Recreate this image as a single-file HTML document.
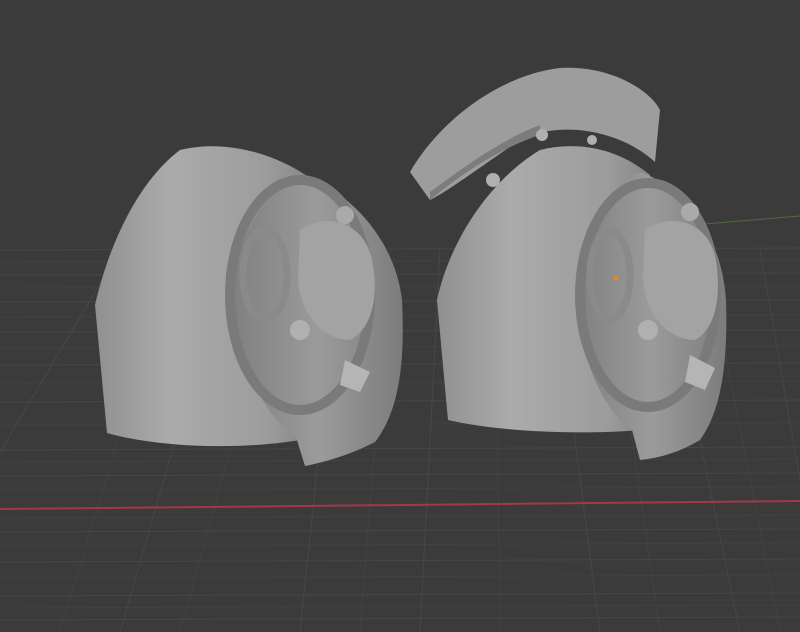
<!DOCTYPE html>
<html><head><style>html,body{margin:0;padding:0;background:#3b3b3b;overflow:hidden}svg{display:block}</style></head>
<body>
<svg width="800" height="632" viewBox="0 0 800 632" xmlns="http://www.w3.org/2000/svg">
<defs>
<linearGradient id="b" x1="0" y1="0" x2="1" y2="0">
<stop offset="0" stop-color="#909090"/><stop offset="0.35" stop-color="#ababab"/><stop offset="0.8" stop-color="#9c9c9c"/><stop offset="1" stop-color="#878787"/></linearGradient>
<linearGradient id="f" x1="0" y1="0" x2="1" y2="0">
<stop offset="0" stop-color="#808080"/><stop offset="0.5" stop-color="#9b9b9b"/><stop offset="1" stop-color="#7c7c7c"/></linearGradient>
</defs>
<rect width="800" height="632" fill="#3b3b3b"/>
<g stroke="#424242" stroke-width="1">
<line x1="0" y1="262" x2="800" y2="260"/><line x1="0" y1="288" x2="800" y2="286"/>
<line x1="0" y1="317" x2="800" y2="315"/><line x1="0" y1="348" x2="800" y2="346"/>
<line x1="0" y1="383" x2="800" y2="381"/><line x1="0" y1="425" x2="800" y2="423"/>
<line x1="0" y1="462" x2="800" y2="459"/><line x1="0" y1="490" x2="800" y2="487"/>
<line x1="0" y1="518" x2="800" y2="515"/><line x1="0" y1="546" x2="800" y2="543"/>
<line x1="0" y1="578" x2="800" y2="575"/><line x1="0" y1="608" x2="800" y2="605"/>
<line x1="60" y1="632" x2="175" y2="250"/><line x1="180" y1="632" x2="285" y2="250"/>
<line x1="360" y1="632" x2="390" y2="250"/><line x1="500" y1="632" x2="495" y2="250"/>
<line x1="660" y1="632" x2="605" y2="250"/><line x1="780" y1="632" x2="705" y2="250"/>
</g>
<g stroke="#474747" stroke-width="1">
<line x1="0" y1="250" x2="800" y2="248"/><line x1="0" y1="275" x2="800" y2="273"/>
<line x1="0" y1="302" x2="800" y2="300"/><line x1="0" y1="332" x2="800" y2="330"/>
<line x1="0" y1="365" x2="800" y2="363"/><line x1="0" y1="402" x2="800" y2="400"/>
<line x1="0" y1="450" x2="800" y2="447"/><line x1="0" y1="476" x2="800" y2="473"/>
<line x1="0" y1="532" x2="800" y2="529"/><line x1="0" y1="562" x2="800" y2="559"/>
<line x1="0" y1="596" x2="800" y2="593"/><line x1="0" y1="620" x2="800" y2="617"/>
<line x1="0" y1="452" x2="120" y2="250"/><line x1="120" y1="632" x2="230" y2="250"/>
<line x1="300" y1="632" x2="340" y2="250"/><line x1="420" y1="632" x2="440" y2="250"/>
<line x1="600" y1="632" x2="550" y2="250"/><line x1="740" y1="632" x2="660" y2="250"/>
<line x1="800" y1="480" x2="760" y2="250"/>
</g>
<line x1="0" y1="509" x2="800" y2="501" stroke="#a0394a" stroke-width="2"/>
<line x1="680" y1="226" x2="800" y2="216" stroke="#4f6b3d" stroke-width="1"/>
<!-- left pad -->
<path d="M107,433 L95,305 C110,240 140,180 180,150 C220,140 270,150 310,178 L300,440 C240,450 160,448 107,433Z" fill="url(#b)"/>
<path d="M300,175 C350,190 395,240 402,300 C405,360 400,410 375,442 C350,455 325,462 305,466 L296,437 C270,420 245,380 235,320 C228,260 250,200 300,175Z" fill="url(#f)"/>
<ellipse cx="300" cy="295" rx="70" ry="115" fill="none" stroke="#7a7a7a" stroke-width="10"/>
<ellipse cx="265" cy="275" rx="22" ry="45" fill="none" stroke="#8a8a8a" stroke-width="7"/>
<path d="M300,230 C330,210 365,225 372,260 C380,300 370,330 350,340 C320,340 300,310 298,280Z" fill="#a3a3a3"/>
<circle cx="300" cy="330" r="10" fill="#b0b0b0"/><circle cx="345" cy="215" r="9" fill="#aaa"/>
<path d="M345,360 L370,372 L360,392 L340,385Z" fill="#b5b5b5"/>
<!-- right pad -->
<path d="M448,420 L437,300 C450,240 490,180 540,150 C580,140 620,150 650,175 L640,430 C580,435 500,432 448,420Z" fill="url(#b)"/>
<path d="M410,172 C440,120 500,75 560,68 C610,65 650,90 660,110 L655,162 C620,130 560,120 520,140 C490,160 450,190 430,200 Z" fill="#9d9d9d"/>
<path d="M430,200 C460,175 500,148 540,135 L540,125 C500,140 460,170 430,192Z" fill="#7c7c7c"/>
<circle cx="493" cy="180" r="7" fill="#b0b0b0"/><circle cx="542" cy="135" r="6" fill="#b0b0b0"/><circle cx="592" cy="140" r="5" fill="#b0b0b0"/>
<path d="M640,172 C690,190 722,240 726,300 C728,360 722,410 700,440 C680,452 660,458 640,460 L632,430 C605,410 585,370 578,315 C572,255 595,195 640,172Z" fill="url(#f)"/>
<ellipse cx="648" cy="295" rx="68" ry="112" fill="none" stroke="#7a7a7a" stroke-width="10"/>
<ellipse cx="610" cy="275" rx="20" ry="44" fill="none" stroke="#8a8a8a" stroke-width="7"/>
<path d="M645,230 C675,210 710,225 716,260 C722,300 714,330 695,340 C665,340 645,310 643,280Z" fill="#a3a3a3"/>
<circle cx="648" cy="330" r="10" fill="#b0b0b0"/><circle cx="690" cy="212" r="9" fill="#aaa"/>
<path d="M690,355 L715,368 L705,390 L685,382Z" fill="#b5b5b5"/>
<circle cx="616" cy="278" r="2.5" fill="#e08a20"/>
</svg>
</body></html>
